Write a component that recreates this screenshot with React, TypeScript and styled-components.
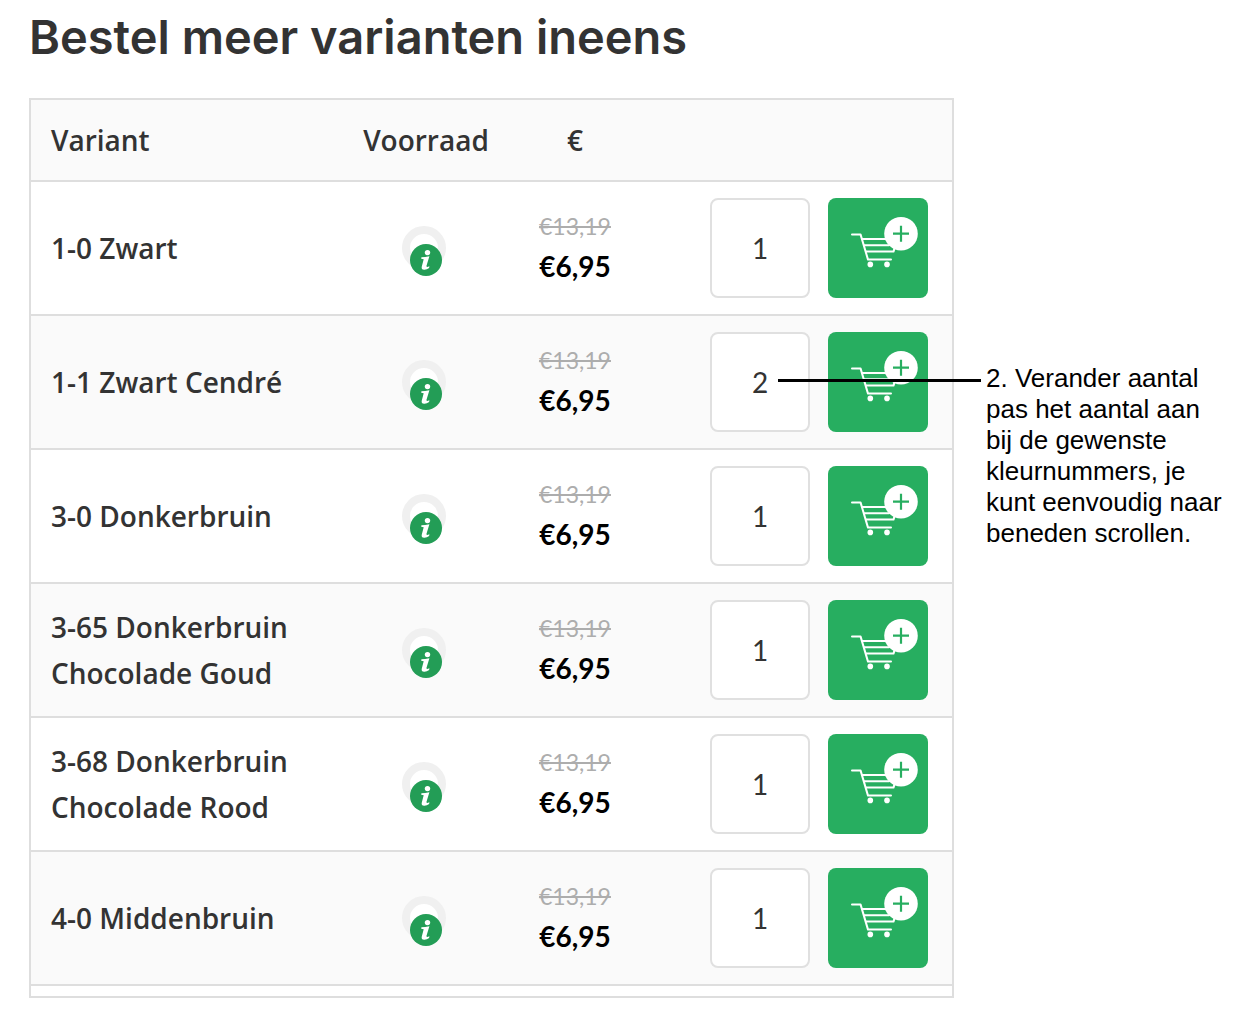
import React from 'react';
import styled, { createGlobalStyle } from 'styled-components';

const GlobalStyle = createGlobalStyle`
  *, *::before, *::after { box-sizing: border-box; }
  body {
    margin: 0;
    background: #fff;
    color: #333;
    font-family: Lato, 'Open Sans', sans-serif;
  }
`;

const Page = styled.div`
  display: grid;
  grid-template-columns: minmax(0, 1fr) 240px;
  column-gap: 32px;
  padding: 8px 15px 20px 29px;
`;

const Title = styled.h1`
  grid-column: 1 / -1;
  margin: 0 0 32px;
  font: 600 47px/58px Inter, sans-serif;
`;

const Panel = styled.section`
  border: 2px solid #dedede;
  padding-bottom: 10px;
`;

const Table = styled.table`
  width: 100%;
  table-layout: fixed;
  border-collapse: separate;
  border-spacing: 0;
`;

const Col = styled.col<{ $width?: number }>`
  width: ${({ $width }) => ($width ? `${$width}px` : 'auto')};
`;

const HeadCell = styled.th<{ $center?: boolean }>`
  height: 82px;
  padding: 0 0 0 ${({ $center }) => ($center ? 0 : 20)}px;
  border-bottom: 2px solid #dedede;
  background: #fafafa;
  text-align: ${({ $center }) => ($center ? 'center' : 'left')};
  font-family: 'Open Sans', sans-serif;
  font-size: 28px;
  font-weight: 600;
`;

const Row = styled.tr`
  &:nth-child(even) { background: #fafafa; }
  > * { border-bottom: 2px solid #dedede; }
`;

const NameCell = styled.th`
  padding: 0 20px;
  text-align: left;
  font-family: 'Open Sans', sans-serif;
  font-size: 28px;
  font-weight: 600;
  line-height: 46px;
`;

const Cell = styled.td`
  padding: 0;
  text-align: center;
`;

const StockButton = styled.button`
  display: block;
  margin: 0 auto;
  padding: 0;
  border: 0;
  background: none;
  cursor: pointer;
  svg { display: block; }
`;

const Prices = styled.div`
  display: flex;
  flex-direction: column;
  padding-bottom: 4px;
  line-height: 40px;
`;

const OldPrice = styled.s`
  color: #adadad;
  font-size: 23px;
  font-weight: 400;
`;

const Price = styled.strong`
  color: #000;
  font-size: 28px;
  font-weight: 700;
`;

const Actions = styled.div`
  display: flex;
  justify-content: flex-end;
  gap: 18px;
  padding: 16px 24px 16px 0;
`;

const Quantity = styled.input`
  width: 100px;
  height: 100px;
  padding: 0;
  border: 2px solid #e0e0e0;
  border-radius: 8px;
  background: #fff;
  color: #333;
  font: 400 28px/40px Lato, sans-serif;
  text-align: center;
`;

const AddButton = styled.button`
  width: 100px;
  height: 100px;
  padding: 0;
  border: 0;
  border-radius: 8px;
  background: #27ae60;
  cursor: pointer;
  svg { display: block; }
`;

const Callout = styled.aside`
  position: relative;
  align-self: start;
  margin-top: 265px;
  color: #000;
  font: 26px/31px 'Liberation Sans', Arial, sans-serif;
  white-space: pre-line;

  &::before {
    content: '';
    position: absolute;
    top: 16px;
    right: calc(100% + 5px);
    width: 203px;
    height: 3px;
    background: #000;
  }
`;

const StockIcon = () => (
  <svg width="48" height="56" viewBox="0 0 48 56" aria-hidden="true">
    <circle cx="22" cy="28" r="18" fill="#fff" stroke="#f0f0f0" strokeWidth="8" />
    <circle cx="24" cy="40" r="16" fill="#239d56" />
    <circle cx="25.5" cy="32.6" r="2.7" fill="#fff" />
    <path
      d="M19.4 37.2q3.6-.2 8-1l-2.9 9.6q-.3 1.3.8 1.1l2.1-.6-.3 1.6q-2.3 1.9-4.9 1.8-3.2-.2-2.4-3.3l1.9-7.2-2.5-.5z"
      fill="#fff"
    />
  </svg>
);

const CartIcon = () => (
  <svg width="100" height="100" viewBox="0 0 100 100" fill="none" aria-hidden="true">
    <g stroke="#fff" strokeWidth="2" strokeLinecap="round" strokeLinejoin="round">
      <path d="M24 36.6h8.6L40 61.6h23" />
      <path d="M34 41h26M36 47.3h25M38 53.6h27.5l1.5-5" />
    </g>
    <circle cx="42.3" cy="66.4" r="2.8" fill="#fff" />
    <circle cx="59" cy="66.4" r="2.8" fill="#fff" />
    <circle cx="73" cy="35.7" r="16.8" fill="#fff" />
    <path d="M65 35.7h16M73 27.7v16" stroke="#27ae60" strokeWidth="2.2" />
  </svg>
);

const variants = [
  { name: '1-0 Zwart', quantity: 1 },
  { name: '1-1 Zwart Cendré', quantity: 2 },
  { name: '3-0 Donkerbruin', quantity: 1 },
  { name: '3-65 Donkerbruin Chocolade Goud', quantity: 1 },
  { name: '3-68 Donkerbruin Chocolade Rood', quantity: 1 },
  { name: '4-0 Middenbruin', quantity: 1 },
];

export default function App() {
  return (
    <>
      <GlobalStyle />
      <Page>
        <Title>Bestel meer varianten ineens</Title>
        <Panel>
          <Table>
            <colgroup>
              <Col />
              <Col $width={158} />
              <Col $width={140} />
              <Col $width={307} />
            </colgroup>
            <thead>
              <tr>
                <HeadCell scope="col">Variant</HeadCell>
                <HeadCell scope="col" $center>Voorraad</HeadCell>
                <HeadCell scope="col" $center>€</HeadCell>
                <HeadCell as="td" />
              </tr>
            </thead>
            <tbody>
              {variants.map(({ name, quantity }) => (
                <Row key={name}>
                  <NameCell scope="row">{name}</NameCell>
                  <Cell>
                    <StockButton type="button" aria-label={`Voorraad ${name}`}>
                      <StockIcon />
                    </StockButton>
                  </Cell>
                  <Cell>
                    <Prices>
                      <OldPrice>€13,19</OldPrice>
                      <Price>€6,95</Price>
                    </Prices>
                  </Cell>
                  <Cell>
                    <Actions>
                      <Quantity
                        type="text"
                        inputMode="numeric"
                        defaultValue={quantity}
                        aria-label={`Aantal ${name}`}
                      />
                      <AddButton type="button" aria-label={`${name} in winkelwagen`}>
                        <CartIcon />
                      </AddButton>
                    </Actions>
                  </Cell>
                </Row>
              ))}
            </tbody>
          </Table>
        </Panel>
        <Callout>
          {'2. Verander aantal\npas het aantal aan\nbij de gewenste\nkleurnummers, je\nkunt eenvoudig naar\nbeneden scrollen.'}
        </Callout>
      </Page>
    </>
  );
}
